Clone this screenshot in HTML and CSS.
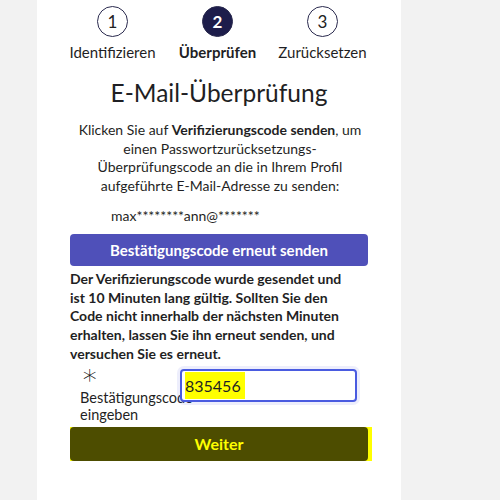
FILE: index.html
```html
<!DOCTYPE html>
<html lang="de">
<head>
<meta charset="utf-8">
<link rel="stylesheet" href="styles.css">
</head>
<body>
<div class="panel">
  <div class="steps">
    <div class="step"><span class="circle">1</span><span class="step-label">Identifizieren</span></div>
    <div class="step active"><span class="circle">2</span><span class="step-label">Überprüfen</span></div>
    <div class="step"><span class="circle">3</span><span class="step-label">Zurücksetzen</span></div>
  </div>
  <h1 class="title">E-Mail-Überprüfung</h1>
  <p class="intro">Klicken Sie auf <b>Verifizierungscode senden</b>, um einen Passwortzurücksetzungs-Überprüfungscode an die in Ihrem Profil aufgeführte E-Mail-Adresse zu senden:</p>
  <div class="content">
    <p class="email">max********ann@*******</p>
    <button class="btn-resend">Bestätigungscode erneut senden</button>
    <p class="notice">Der Verifizierungscode wurde gesendet und ist 10 Minuten lang gültig. Sollten Sie den Code nicht innerhalb der nächsten Minuten erhalten, lassen Sie ihn erneut senden, und versuchen Sie es erneut.</p>
    <div class="field">
      <label class="field-label"><span class="req">∗</span>Bestätigungscode eingeben</label>
      <div class="input"><span class="hl">835456</span></div>
    </div>
    <div class="next-wrap"><button class="btn-next">Weiter</button></div>
  </div>
</div>
</body>
</html>
```
FILE: styles.css
```css
html, body {
  margin: 0;
  padding: 0;
  background: #f2f2f2;
  height: 100%;
}
body {
  font-family: Lato, "Open Sans", sans-serif;
  color: #1f1f24;
}
.panel {
  margin-left: 37px;
  width: 364px;
  height: 500px;
  background: #ffffff;
  box-sizing: border-box;
  padding-top: 6px;
}
.steps {
  display: grid;
  grid-template-columns: repeat(3, 105px);
  justify-content: center;
  margin-left: -3px;
}
.step {
  display: flex;
  flex-direction: column;
  align-items: center;
}
.circle {
  width: 29px;
  height: 29px;
  border: 1px solid #2a2a4e;
  border-radius: 50%;
  display: flex;
  align-items: center;
  justify-content: center;
  font-size: 17px;
  color: #222;
}
.step.active .circle {
  background: #1d1d4b;
  color: #fff;
  font-weight: bold;
}
.step-label {
  font-size: 15px;
  margin-top: 6px;
  line-height: 18px;
}
.step.active .step-label {
  font-weight: bold;
}
.title {
  font-size: 24.5px;
  font-weight: normal;
  text-align: center;
  margin: 17px 0 0;
  line-height: 30px;
}
.intro {
  font-size: 14px;
  line-height: 18.7px;
  text-align: center;
  margin: 13px 30px 0 32px;
}
.content {
  padding: 0 33px;
}
.email {
  font-size: 14px;
  margin: 10px 0 0 41px;
  line-height: 19px;
}
.btn-resend {
  display: block;
  width: 100%;
  height: 32px;
  margin-top: 9px;
  border: none;
  border-radius: 4px;
  background: #4f50b9;
  color: #fff;
  font-family: inherit;
  font-weight: bold;
  font-size: 15px;
}
.notice {
  font-weight: bold;
  font-size: 14px;
  line-height: 18.8px;
  margin: 4px 10px 0 0;
}
.field {
  display: grid;
  grid-template-columns: 100px 177px;
  margin: 5px 0 0 10px;
}
.field-label {
  font-size: 14.5px;
  line-height: 17px;
}
.req {
  display: block;
  font-family: "DejaVu Sans", sans-serif;
  font-weight: 200;
  font-size: 28px;
  line-height: 11px;
  height: 20px;
  margin-left: 1px;
  color: #111;
}
.input {
  position: relative;
  z-index: 1;
  height: 33px;
  box-sizing: border-box;
  border: 2px solid #4a5be0;
  border-radius: 4px;
  box-shadow: 0 0 0 3px rgba(74, 91, 224, 0.1);
  background: #fff;
  padding: 1px 3px;
  font-size: 16px;
  display: flex;
  align-items: stretch;
}
.hl {
  background: #ffff00;
  display: flex;
  align-items: center;
  padding-right: 4px;
}
.next-wrap {
  margin-top: 4px;
  width: 302px;
  background: #ffff00;
}
.btn-next {
  display: block;
  width: 298px;
  height: 34px;
  border: none;
  border-radius: 4px;
  background: #4d4d00;
  color: #ffff00;
  font-family: inherit;
  font-weight: bold;
  font-size: 16px;
}
```
